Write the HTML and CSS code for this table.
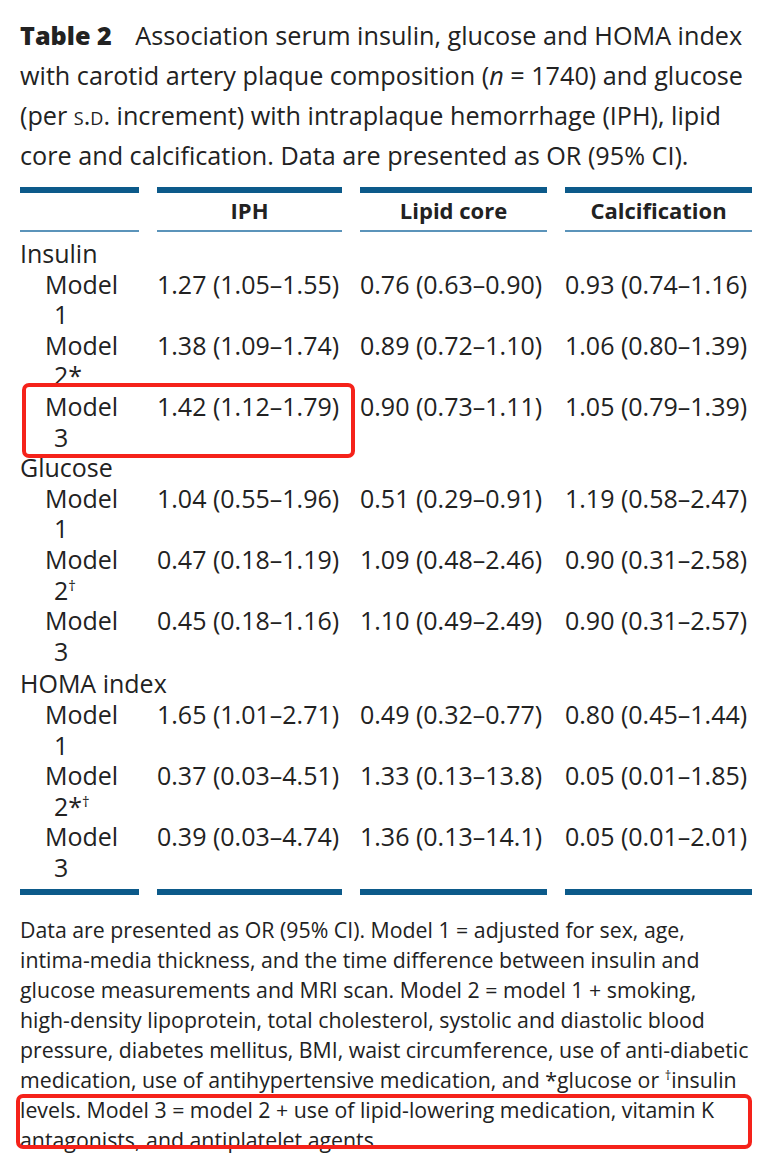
FILE: index.html
```html
<!DOCTYPE html>
<html lang="en">
<head>
<meta charset="utf-8">
<title>Table 2</title>
<link rel="stylesheet" href="styles.css">
</head>
<body>
<div class="page">
  <p class="caption"><span class="label">Table 2</span> Association serum insulin, glucose and HOMA index with carotid artery plaque composition (<i>n</i> = 1740) and glucose (per <span class="sc">s.d.</span> increment) with intraplaque hemorrhage (IPH), lipid core and calcification. Data are presented as OR (95% CI).</p>

  <table class="data">
    <colgroup>
      <col class="c1"><col class="c2"><col class="c3"><col class="c4">
    </colgroup>
    <thead>
      <tr><th></th><th>IPH</th><th>Lipid core</th><th>Calcification</th></tr>
    </thead>
    <tbody>
      <tr class="group first"><td colspan="4">Insulin</td></tr>
      <tr><td class="model">Model 1</td><td>1.27 (1.05–1.55)</td><td>0.76 (0.63–0.90)</td><td>0.93 (0.74–1.16)</td></tr>
      <tr><td class="model">Model 2*</td><td>1.38 (1.09–1.74)</td><td>0.89 (0.72–1.10)</td><td>1.06 (0.80–1.39)</td></tr>
      <tr><td class="model">Model 3</td><td>1.42 (1.12–1.79)</td><td>0.90 (0.73–1.11)</td><td>1.05 (0.79–1.39)</td></tr>
      <tr class="group"><td colspan="4">Glucose</td></tr>
      <tr><td class="model">Model 1</td><td>1.04 (0.55–1.96)</td><td>0.51 (0.29–0.91)</td><td>1.19 (0.58–2.47)</td></tr>
      <tr><td class="model">Model 2<sup>†</sup></td><td>0.47 (0.18–1.19)</td><td>1.09 (0.48–2.46)</td><td>0.90 (0.31–2.58)</td></tr>
      <tr><td class="model">Model 3</td><td>0.45 (0.18–1.16)</td><td>1.10 (0.49–2.49)</td><td>0.90 (0.31–2.57)</td></tr>
      <tr class="group homa"><td colspan="4">HOMA index</td></tr>
      <tr><td class="model">Model 1</td><td>1.65 (1.01–2.71)</td><td>0.49 (0.32–0.77)</td><td>0.80 (0.45–1.44)</td></tr>
      <tr><td class="model">Model 2*<sup>†</sup></td><td>0.37 (0.03–4.51)</td><td>1.33 (0.13–13.8)</td><td>0.05 (0.01–1.85)</td></tr>
      <tr class="last"><td class="model">Model 3</td><td>0.39 (0.03–4.74)</td><td>1.36 (0.13–14.1)</td><td>0.05 (0.01–2.01)</td></tr>
    </tbody>
  </table>

  <p class="note">Data are presented as OR (95% CI). Model 1 = adjusted for sex, age, intima-media thickness, and the time difference between insulin and glucose measurements and MRI scan. Model 2 = model 1 + smoking, high-density lipoprotein, total cholesterol, systolic and diastolic blood pressure, diabetes mellitus, BMI, waist circumference, use of anti-diabetic medication, use of antihypertensive medication, and *glucose or <sup>†</sup>insulin levels. Model 3 = model 2 + use of lipid-lowering medication, vitamin K antagonists, and antiplatelet agents.</p>

  <div class="mark mark-row"></div>
  <div class="mark mark-note"></div>
</div>
</body>
</html>
```

FILE: styles.css
```css
html, body {
  margin: 0;
  padding: 0;
  background: #ffffff;
}

body {
  font-family: "Open Sans", "DejaVu Sans", sans-serif;
  color: #222222;
}

.page {
  position: relative;
  width: 732px;
  padding: 15px 22px 0 20px;
}

.caption {
  margin: 0;
  font-size: 25.2px;
  line-height: 40px;
}

.caption .label {
  font-weight: 800;
  margin-right: 17px;
}

.caption .sc {
  font-variant: small-caps;
}

.data {
  table-layout: fixed;
  width: 768px;
  margin: 12px -18px 0;
  border-collapse: separate;
  border-spacing: 18px 0;
  font-size: 25px;
  line-height: 30.6px;
}

.data col.c1 { width: 119px; }
.data col.c2 { width: 185px; }
.data col.c3 { width: 187px; }
.data col.c4 { width: 187px; }

.data th {
  border-top: 6px solid #0c5a8a;
  border-bottom: 2px solid #5b94ba;
  padding: 3px 0 5px;
  font-size: 22px;
  line-height: 29px;
  font-weight: 700;
  text-align: center;
}

.data td {
  padding: 0;
  vertical-align: top;
  white-space: nowrap;
}

.data td.model {
  white-space: normal;
  padding-left: 34px;
  padding-right: 8px;
  text-indent: -9px;
}

.data tr.first td {
  padding-top: 6px;
}

.data tr.homa td {
  padding-top: 2px;
}

.data tr.last td {
  padding-bottom: 7px;
  border-bottom: 6px solid #0c5a8a;
}

.data sup {
  font-size: 0.6em;
  line-height: 0;
}

.note {
  margin: 20px 3px 0 0;
  font-size: 21.3px;
  line-height: 30px;
}

.note sup {
  font-size: 0.6em;
  line-height: 0;
}

.mark {
  position: absolute;
  border: 4px solid #f5221a;
  border-radius: 7px;
}

.mark-row {
  left: 22px;
  top: 383px;
  width: 325px;
  height: 67px;
}

.mark-note {
  left: 16px;
  top: 1094px;
  width: 728px;
  height: 47px;
}
```
